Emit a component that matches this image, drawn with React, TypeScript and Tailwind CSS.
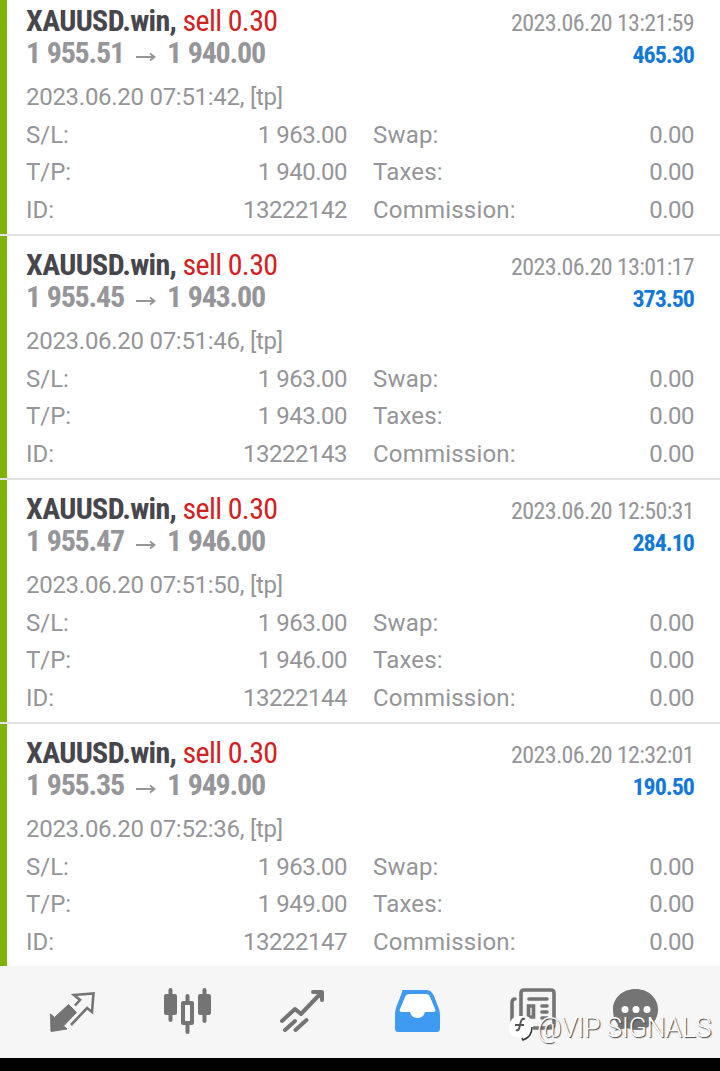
import React from "react";

interface Deal {
  open: string;
  close: string;
  openTime: string;
  closeTime: string;
  profit: string;
  id: string;
}

const deals: Deal[] = [
  { open: "1 955.51", close: "1 940.00", openTime: "07:51:42", closeTime: "13:21:59", profit: "465.30", id: "13222142" },
  { open: "1 955.45", close: "1 943.00", openTime: "07:51:46", closeTime: "13:01:17", profit: "373.50", id: "13222143" },
  { open: "1 955.47", close: "1 946.00", openTime: "07:51:50", closeTime: "12:50:31", profit: "284.10", id: "13222144" },
  { open: "1 955.35", close: "1 949.00", openTime: "07:52:36", closeTime: "12:32:01", profit: "190.50", id: "13222147" },
];

const DetailRow: React.FC<{ label: string; value: string; name: string; amount: string }> = ({
  label,
  value,
  name,
  amount,
}) => (
  <div className="flex h-[37.5px] items-center">
    <div className="flex w-[321px] justify-between">
      <span>{label}</span>
      <span className="tracking-[-0.5px]">{value}</span>
    </div>
    <div className="ml-[26px] flex flex-1 justify-between">
      <span className="tracking-[0.2px]">{name}</span>
      <span className="tracking-[-0.5px]">{amount}</span>
    </div>
  </div>
);

const DealCard: React.FC<{ deal: Deal }> = ({ deal }) => (
  <div className="h-[244px] shrink-0 border-b-2 border-[#e2e2e4] bg-white">
    <div className="h-full border-l-[7px] border-[#80b30a] pt-[13px] pr-[26px] pl-[19px]">
      <div className="flex justify-between font-stretch-condensed">
        <div className="text-[30px] leading-8 whitespace-pre">
          <div className="tracking-[-0.65px]">
            <span className="font-bold text-[#46464c]">XAUUSD.win, </span>
            <span className="text-[#d02222]">sell 0.30</span>
          </div>
          <div className="flex items-center font-bold tracking-[-1.2px] text-[#96969a] [word-spacing:1px]">
            {deal.open}
            <svg className="mt-2 mr-[11px] ml-3 h-3 w-5" viewBox="0 0 20 12" fill="none" stroke="currentColor" strokeWidth="2">
              <path d="M0 6h18M14 2.500l4.500 3.500-4.500 3.500" />
            </svg>
            {deal.close}
          </div>
        </div>
        <div className="pt-0.5 text-right text-2xl leading-8">
          <div className="tracking-[-0.65px]">2023.06.20 {deal.closeTime}</div>
          <div className="font-bold tracking-[-1px] text-[#1479d6]">{deal.profit}</div>
        </div>
      </div>
      <div className="mt-[7px] mb-[0.5px] flex h-[37.5px] items-center tracking-[-0.28px]">2023.06.20 {deal.openTime}, [tp]</div>
      <DetailRow label="S/L:" value="1 963.00" name="Swap:" amount="0.00" />
      <DetailRow label="T/P:" value={deal.close} name="Taxes:" amount="0.00" />
      <DetailRow label="ID:" value={deal.id} name="Commission:" amount="0.00" />
    </div>
  </div>
);

const TabBar: React.FC = () => (
  <div className="relative z-10 h-[92px] shrink-0 bg-[#f6f6f6] text-[#747474]">
    <div className="flex h-full items-center">
      <svg className="ml-[30px] size-[92px]" viewBox="0 0 92 92" fill="currentColor">
        <path d="M20.500 48l4 3.500 14-13 8 8-13 13.500 3.500 3-16 2.500z" stroke="currentColor" strokeLinejoin="round" />
        <path d="M45 39.500l5-5.500-6-5 19.500-1.500-1.500 18.500-5-4-16 17" fill="none" stroke="currentColor" strokeWidth="2.600" />
      </svg>
      <svg className="ml-[28px] size-[92px]" viewBox="0 0 92 92" fill="none" stroke="currentColor">
        <path d="M20.500 24v30M54.500 24v31M37.500 30v5M37.500 57v9" strokeWidth="4" strokeLinecap="round" />
        <path d="M16 30h9v17h-9zM50 30h9v17h-9z" fill="currentColor" strokeWidth="4" strokeLinejoin="round" />
        <path d="M33 37h9v20h-9z" strokeWidth="4" strokeLinejoin="round" />
      </svg>
      <svg className="ml-[18px] size-[92px]" viewBox="0 0 92 92" fill="none" stroke="currentColor" strokeWidth="4" strokeLinecap="round">
        <path d="M22 55l13-12 6 5 20-21M53 26h9v8M25 64l10-9M35.500 64l11-10" strokeLinejoin="round" />
      </svg>
      <svg className="ml-[18px] size-[92px]" viewBox="0 0 92 92">
        <path d="M33 24h23c4 0 6 2 8 6l5 13c1 3 1 6 1 9v10c0 3-1 4-4 4H29c-3 0-4-1-4-4V48c0-5 4-14 6-19 1-3 1-5 2-5z" fill="#3f9bf1" />
        <path d="M36 28h20c2 0 3 1 4 3l5 12c1 2 0 3-2 3h-8a7.700 7.700 0 0 1-15 0h-8c-2 0-3-1-2-3l5-12c1-2 2-3 5-3z" fill="#fff" />
      </svg>
      <svg className="ml-[28px] size-[92px]" viewBox="0 0 92 92" fill="none" stroke="currentColor" strokeWidth="3.600" strokeLinecap="round">
        <path d="M31 62V27q0-3 3-3h27q3 0 3 3v31q0 4-4 4H27q-5 0-5-6V37q0-4 3-4M39 33h18M38.500 40h5v11h-5zM52 40h5M52 46h5M52 52h5" />
      </svg>
      <svg className="ml-[18px] size-[92px]" viewBox="0 0 92 92">
        <path d="M35.500 23c13 0 22.500 9 22.500 20.500S49 64 37 64c-4 0-7-1-10-2l-13 3c4-3 5-5 3-8-3-4-4-8-4-13.500C13 32 22.500 23 35.500 23z" fill="currentColor" />
        <g fill="#fff">
          <circle cx="25" cy="43.500" r="3.500" />
          <circle cx="36" cy="43.500" r="3.500" />
          <circle cx="47" cy="43.500" r="3.500" />
        </g>
      </svg>
    </div>
    <div className="absolute top-[44px] left-[508px] flex items-center text-white">
      <svg className="h-8 w-[27px]" viewBox="0 0 27 32">
        <path d="M11 4h5c6 0 9 4 9 11 0 6-4 11-10 13l-2-2-6-1c-4-1-6-4-6-9 0-7 4-12 10-12z" fill="#fff" />
        <path d="M24 15c0 6-3 11-9 13l-1-2" fill="none" stroke="#333" strokeWidth="1.500" />
        <path d="M17 7c-3-1-4 1-5 6s-2 6-4 5M7 13h9" fill="none" stroke="#555" strokeWidth="2" />
      </svg>
      <span className="ml-0.5 text-[27px] leading-9 font-light tracking-[-0.5px] whitespace-nowrap [text-shadow:1px_1px_1px_#444]">
        @VIP SIGNALS
      </span>
    </div>
  </div>
);

const App: React.FC = () => {
  return (
    <div className="flex h-[1071px] w-[720px] flex-col overflow-hidden bg-black font-['Roboto',sans-serif] text-2xl text-[#959599]">
      <div className="flex h-[966px] shrink-0 flex-col justify-end overflow-hidden bg-white">
        <div className="-mb-0.5">
          {deals.map((deal) => (
            <DealCard key={deal.id} deal={deal} />
          ))}
        </div>
      </div>
      <TabBar />
    </div>
  );
};

export default App;
